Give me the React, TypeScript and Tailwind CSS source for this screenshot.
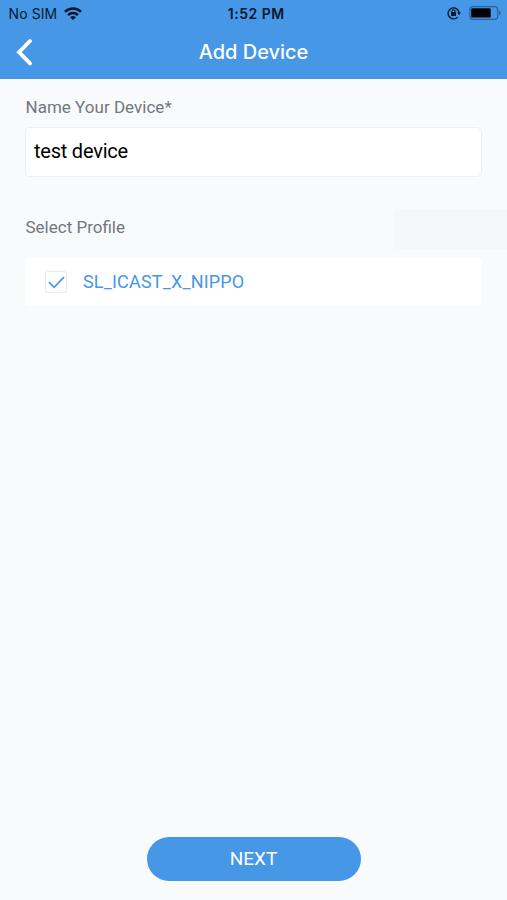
import { useState } from 'react';

interface Profile { id: number; name: string; }

const profiles: Profile[] = [{ id: 1, name: 'SL_ICAST_X_NIPPO' }];

function StatusBar() {
  return (
    <div className="grid h-[27px] grid-cols-[1fr_auto_1fr] items-center pl-[8.5px] pr-[6px] font-[Inter,sans-serif] text-[14px] leading-[27px] text-[#06182b]">
      <div className="flex items-center gap-[7px]">
        <span className="whitespace-nowrap tracking-[0.1px]">No SIM</span>
        <svg width="18" height="13" viewBox="0 0 18 13" fill="none" stroke="currentColor" strokeWidth="2.5" className="mb-px">
          <path d="M1 4.9C5.4 0.5 12.6 0.5 17 4.9" />
          <path d="M4 8.1C6.8 5.4 11.2 5.4 14 8.1" />
          <path d="M9 13L6.1 10.2C7.7 8.7 10.3 8.7 11.9 10.2Z" fill="currentColor" stroke="none" />
        </svg>
      </div>
      <span className="ml-[3px] whitespace-nowrap text-center text-[14px] font-semibold tracking-[0.5px]">1:52 PM</span>
      <div className="flex items-center justify-end gap-[8px] pb-px">
        {/* Rotation lock */}
        <svg width="14" height="14" viewBox="0 0 14 14" fill="none" stroke="currentColor">
          <path d="M10.7 11.1A5.5 5.5 0 1 1 12.1 7" strokeWidth="1.4" />
          <path d="M10.2 6.4H14L12.1 9.3Z" fill="currentColor" stroke="none" />
          <rect x="4" y="6.1" width="5" height="3.9" rx="0.5" fill="currentColor" stroke="none" />
          <path d="M5 6.5V5.2a1.5 1.5 0 0 1 3 0V6.5" strokeWidth="1.1" />
        </svg>
        {/* Battery */}
        <svg width="32" height="14" viewBox="0 0 32 14" fill="none">
          <rect x="0.7" y="0.6" width="28" height="12.8" rx="3.4" stroke="#2b629a" strokeWidth="1.2" />
          <rect x="2.2" y="2.2" width="19.5" height="9.4" rx="1.2" fill="#010407" />
          <path d="M30 4.6C32 5.4 32 8.6 30 9.4Z" fill="#2b629a" />
        </svg>
      </div>
    </div>
  );
}

export default function App() {
  const [deviceName, setDeviceName] = useState('test device');
  const [selectedId, setSelectedId] = useState<number | null>(1);

  return (
    <div className="flex h-[900px] w-[507px] flex-col bg-[#f9fafc] font-[Roboto,sans-serif]">
      <header className="h-[79px] shrink-0 bg-[#4697e6]">
        <StatusBar />
        <div className="grid h-[50px] grid-cols-[60px_1fr_60px] items-center">
          <button type="button" aria-label="Back" className="pl-[16px] text-white">
            <svg width="17" height="28" viewBox="0 0 17 28" fill="none" stroke="currentColor" strokeWidth="3.8" strokeLinecap="round" strokeLinejoin="miter">
              <path d="M14 3L3 14.2L14 25.4" />
            </svg>
          </button>
          <h1 className="text-center font-[Inter,sans-serif] text-[20px] font-medium text-white">Add Device</h1>
        </div>
      </header>

      <main className="flex grow flex-col pt-[17px]">
        <label htmlFor="name" className="pl-[25.5px] text-[17px] leading-[22px] tracking-[0.02px] text-[#73767d]">Name Your Device*</label>
        <input
          id="name"
          type="text"
          value={deviceName}
          onChange={(e) => setDeviceName(e.target.value)}
          className="mx-[25px] mt-[9px] h-[50px] rounded-[5px] border border-[#edeef0] bg-white px-[8px] pb-[2px] text-[20px] tracking-[-0.22px] text-black outline-none"
        />

        <div className="mt-[31px] flex h-[41px] items-center justify-between pl-[25.5px]">
          <h2 className="pb-[2px] text-[17px] text-[#73767d]">Select Profile</h2>
          <div className="h-[40px] w-[113px] bg-[#f6f7fb]" />
        </div>
        <ul className="mx-[25px] mt-[9px]">
          {profiles.map((profile) => (
            <li key={profile.id}>
              <button
                type="button"
                onClick={() => setSelectedId(selectedId === profile.id ? null : profile.id)}
                className="flex h-[48px] w-full items-center gap-[16px] rounded-[3px] bg-white pl-[20px] text-[18px] text-[#4697e6]"
              >
                <span className="flex size-[22px] items-center justify-center rounded-[3px] border border-[#e6e9ed]">
                  {selectedId === profile.id && (
                    <svg width="17" height="13" viewBox="0 0 17 13" fill="none" stroke="currentColor" strokeWidth="1.7">
                      <path d="M1 6.2L6 11.3L16 1.2" />
                    </svg>
                  )}
                </span>
                <span className="pb-[2px] tracking-[0.17px]">{profile.name}</span>
              </button>
            </li>
          ))}
        </ul>
      </main>

      <footer className="flex justify-center pb-[19px]">
        <button type="button" className="h-[44px] w-[214px] rounded-full bg-[#4697e6] text-[19px] text-white">NEXT</button>
      </footer>
    </div>
  );
}
